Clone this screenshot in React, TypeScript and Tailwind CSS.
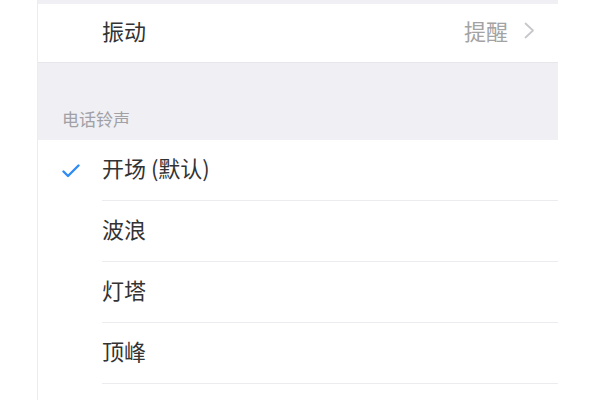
const tones = [
  { name: "开场 (默认)", checked: true },
  { name: "波浪" },
  { name: "灯塔" },
  { name: "顶峰" },
];

const font = { fontFamily: '"Noto Sans CJK SC", "Noto Sans", sans-serif' };

const Check = () => (
  <svg width="18" height="16" viewBox="0 0 18 16" className="text-[#2f8cf5]">
    <path
      d="M1.5 8.5 L6 13 L16.5 2.5"
      fill="none"
      stroke="currentColor"
      strokeWidth="2.4"
      strokeLinecap="round"
      strokeLinejoin="round"
    />
  </svg>
);

const Chevron = () => (
  <svg width="11" height="17" viewBox="0 0 11 17" className="text-[#c7c7cc]">
    <path
      d="M1.5 1.5 L9 8.5 L1.5 15.5"
      fill="none"
      stroke="currentColor"
      strokeWidth="1.8"
      strokeLinecap="round"
      strokeLinejoin="round"
    />
  </svg>
);

export default function App() {
  return (
    <div className="w-[600px] h-[400px] bg-white overflow-hidden" style={font}>
      <div className="ml-[37px] w-[521px] h-full border-l border-[#ececf0]">
        <div className="h-[4px] bg-[#efeff4]" />

        {/* vibration row */}
        <div className="h-[58px] flex items-center pl-[64px] pr-[23px] pb-[5px] bg-white">
          <span className="text-[22px] text-[#333]">振动</span>
          <div className="ml-auto flex items-center gap-[16px]">
            <span className="text-[22px] text-[#a3a3a3]">提醒</span>
            <Chevron />
          </div>
        </div>

        {/* section header */}
        <div className="h-[78px] bg-[#efeff4] border-t border-[#e6e6eb] flex items-end pb-[9px] pl-[24px]">
          <span className="text-[17px] text-[#a0a0a5]">电话铃声</span>
        </div>

        {/* ringtones */}
        <div className="bg-white">
          {tones.map((t) => (
            <div key={t.name} className="flex h-[61px]">
              <div className="w-[64px] flex items-center pl-[24px] pt-[1px]">
                {t.checked && <Check />}
              </div>
              <div className="flex-1 flex items-center pb-[5px] border-b border-[#ececf0]">
                <span className="text-[22px] text-[#333]">{t.name}</span>
              </div>
            </div>
          ))}
        </div>
      </div>
    </div>
  );
}
